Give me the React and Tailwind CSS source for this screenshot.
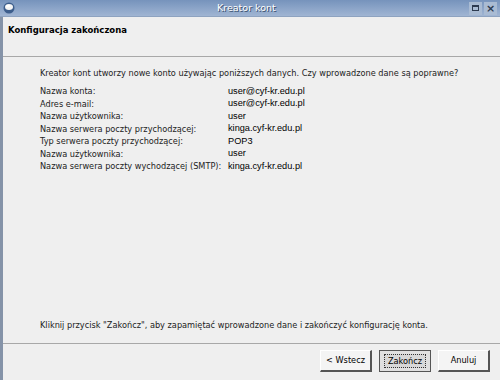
export default function App() {
  const rows = [
    ["Nazwa konta:", "user@cyf-kr.edu.pl"],
    ["Adres e-mail:", "user@cyf-kr.edu.pl"],
    ["Nazwa użytkownika:", "user"],
    ["Nazwa serwera poczty przychodzącej:", "kinga.cyf-kr.edu.pl"],
    ["Typ serwera poczty przychodzącej:", "POP3"],
    ["Nazwa użytkownika:", "user"],
    ["Nazwa serwera poczty wychodzącej (SMTP):", "kinga.cyf-kr.edu.pl"],
  ];
  return (
    <div className="w-[500px] h-[380px] flex flex-col bg-[#efefef] overflow-hidden" style={{ fontFamily: '"DejaVu Sans", sans-serif' }}>
      <div className="h-[17px] flex items-center bg-gradient-to-b from-[#7693bc] to-[#a0b5d3] border-b border-[#8ea3c0] relative">
        <div className="w-[17px] h-[17px] flex items-center justify-center">
          <svg width="12" height="12" viewBox="0 0 12 12">
            <circle cx="6" cy="6" r="5.5" fill="#3d5e8c" />
            <ellipse cx="6" cy="5" rx="4" ry="3" fill="#f4f4f4" />
            <ellipse cx="5" cy="4" rx="2" ry="1.2" fill="#ffffff" />
          </svg>
        </div>
        <div className="flex-1 pl-[200px] text-white text-[9.5px] [text-shadow:1px_1px_0_#3a4f6e] whitespace-nowrap">Kreator kont</div>
        <div className="flex gap-[2px] pr-[3px]">
          <div className="w-[13px] h-[13px] bg-[#a9bbd3] flex items-center justify-center">
            <div className="w-[7px] h-[6px] border border-[#2c3a50] border-t-2" />
          </div>
          <div className="w-[13px] h-[13px] bg-[#a9bbd3] flex items-center justify-center text-[#2c3a50] text-[11px] leading-none font-bold">×</div>
        </div>
      </div>
      <div className="flex-1 flex border-l-[3px] border-[#8593a8]">
        <div className="flex-1 flex flex-col">
          <div className="h-[40px] pl-[5px] pt-[7px] text-[8.5px] font-bold text-black border-b border-[#a8a8a8]">Konfiguracja zakończona</div>
          <div className="flex-1 pl-[37px] pt-[10px] text-[8.2px] text-[#222] flex flex-col">
            <div>Kreator kont utworzy nowe konto używając poniższych danych. Czy wprowadzone dane są poprawne?</div>
            <div className="mt-[6px] flex flex-col">
              {rows.map(([k, v], i) => (
                <div key={i} className="flex h-[12.5px] items-center">
                  <div className="w-[188px] shrink-0">{k}</div>
                  <div className="text-[9.2px] text-black" style={{ fontFamily: '"Liberation Sans", sans-serif' }}>{v}</div>
                </div>
              ))}
            </div>
            <div className="mt-auto mb-[12px]">Kliknij przycisk "Zakończ", aby zapamiętać wprowadzone dane i zakończyć konfigurację konta.</div>
          </div>
          <div className="h-[37px] border-t border-[#a8a8a8] flex items-start justify-end gap-[7px] pt-[6px] pr-[10px] text-[8.2px] text-black">
            <div className="w-[52px] h-[22px] flex items-center justify-center bg-[#f4f4f4] border-r-2 border-b-2 border-[#555] border-l border-t border-l-white border-t-white">&lt; Wstecz</div>
            <div className="w-[52px] h-[22px] flex items-center justify-center bg-[#e0e0e0] border border-[#555]">
              <div className="border border-dotted border-[#333] px-[3px] bg-[#d8d8d8]">Zakończ</div>
            </div>
            <div className="w-[52px] h-[22px] flex items-center justify-center bg-[#f4f4f4] border-r-2 border-b-2 border-[#555] border-l border-t border-l-white border-t-white">Anuluj</div>
          </div>
        </div>
      </div>
    </div>
  );
}
